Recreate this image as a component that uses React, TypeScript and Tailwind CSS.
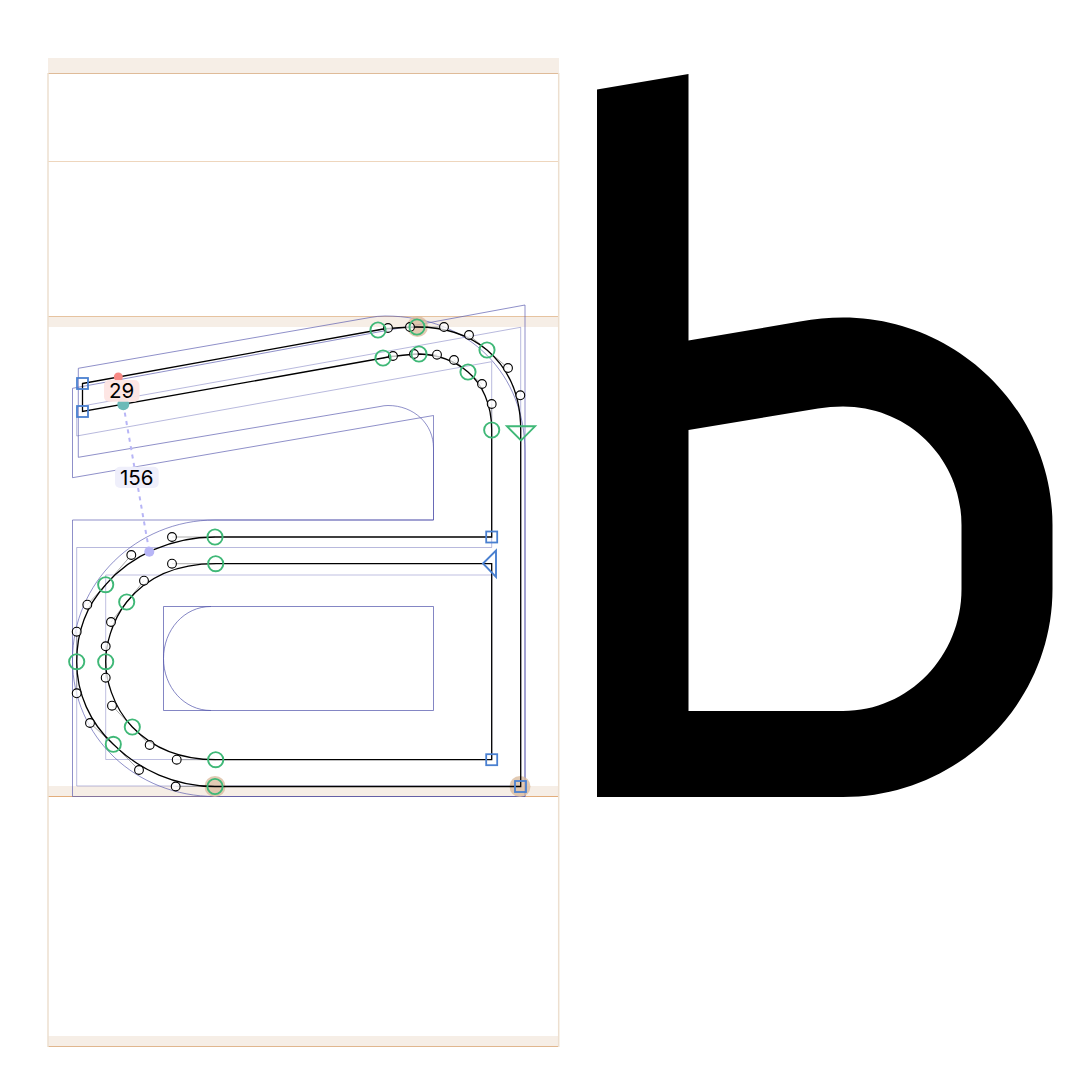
// font editor: glyph "b" outline view + rendered preview
const bands = [
  { y: 58, h: 15 },
  { y: 316, h: 11 },
  { y: 786, h: 10.5 },
  { y: 1036, h: 10 },
];

const metrics = [
  { y: 73.5, color: "#dfbb98" },
  { y: 161.5, color: "#eed6bd" },
  { y: 316.5, color: "#e6c3a0" },
  { y: 796.5, color: "#e2ad7c" },
  { y: 1046.5, color: "#e0b68e" },
];

// skeleton / source drawings behind the contour
const ghosts = [
  { d: "M72.5 388.3L525 305V796.5H72.5V520H433.5V415.5L72.5 477.7Z", opacity: 0.66 },
  { d: "M76.7 407L520.7 327.3V786H76.7V547.5H491.7V361.7L76.7 436Z", opacity: 0.42 },
  { d: "M105.7 575H491.7V759.5H105.7Z", opacity: 0.38 },
  {
    d: "M78.3 368.3L370 317.5Q378 316 385 316C470 316 525 375 525 452V796.5H215C136 796.5 72.5 737 72.5 660C72.5 583 136 520 215 520H433.5V448C433.5 424 414 405.5 388 405.5Q384 405.5 380 406.5L78.3 457.3Z",
    opacity: 0.66,
  },
  { d: "M163.5 606.5H433.5V710.5H163.5Z", opacity: 0.72 },
  { d: "M211 606.5C184 606.5 163.5 630 163.5 658.5C163.5 687 184 710.5 211 710.5", opacity: 0.72 },
];

const outer =
  "M82.5 383.5L378 330C388 328 410 327 417 327C444 327 469 335 487 350C508 368 520.7 395 520.7 430V786.5H215C175.7 786.5 139 770 113.3 744.3C90 723 76.7 693.3 76.7 661.7C76.7 631.7 87.3 604.7 105.7 584.7C131.3 555 172 537 215 537H491.7V430C491.7 404 482 384 468 372C454 360 437 354.7 419 354C414 354 393 356 383 358L82.5 411.5Z";
const inner =
  "M215.7 563.7H491.7V759.7H215.7C176.7 759.7 149.7 745 132.3 727C112 705.7 105.7 677.7 105.7 661.7C105.7 646.3 111 622 126.7 602C144 580.7 172 563.7 215.7 563.7Z";

// on-curve point -> its two handles
const smooth = [
  { on: [378, 330], off: [[388, 328]] },
  { on: [417, 327], off: [[410, 327], [444, 327]] },
  { on: [487, 350], off: [[469, 335], [508, 368]] },
  { on: [468, 372], off: [[454, 360], [482, 384]] },
  { on: [419, 354], off: [[414, 354], [437, 354.7]] },
  { on: [383, 358], off: [[393, 356]] },
  { on: [491.7, 430], off: [[491.7, 404]] },
  { on: [215, 537], off: [[172, 537]] },
  { on: [105.7, 584.7], off: [[87.3, 604.7], [131.3, 555]] },
  { on: [76.7, 661.7], off: [[76.7, 631.7], [76.7, 693.3]] },
  { on: [113.3, 744.3], off: [[90, 723], [139, 770]] },
  { on: [215, 786.5], off: [[175.7, 786.5]] },
  { on: [215.7, 563.7], off: [[172, 563.7]] },
  { on: [126.7, 602], off: [[144, 580.7], [111, 622]] },
  { on: [105.7, 661.7], off: [[105.7, 646.3], [105.7, 677.7]] },
  { on: [132.3, 727], off: [[112, 705.7], [149.7, 745]] },
  { on: [215.7, 759.7], off: [[176.7, 759.7]] },
];

const corners = [
  [82.5, 383.5],
  [82.5, 411.5],
  [491.7, 537],
  [491.7, 759.7],
  [520.5, 786.5],
];

const halos = [
  [417.5, 326.5],
  [215, 786.5],
  [520, 786.5],
];

function EditorCanvas() {
  return (
    <svg width="560" height="1089" viewBox="0 0 560 1089" className="block shrink-0">
      {bands.map((b) => (
        <rect key={b.y} x="48" y={b.y} width="511" height={b.h} fill="#f6eee6" />
      ))}
      {metrics.map((m) => (
        <line key={m.y} x1="48" x2="559" y1={m.y} y2={m.y} stroke={m.color} />
      ))}
      <line x1="48" x2="48" y1="73" y2="1047" stroke="#eddfcf" strokeWidth="1.5" />
      <line x1="558.7" x2="558.7" y1="73" y2="1047" stroke="#eddfcf" strokeWidth="1.5" />

      {ghosts.map((g, i) => (
        <path key={i} d={g.d} fill="none" stroke="#5557ad" strokeOpacity={g.opacity} />
      ))}

      {halos.map(([x, y]) => (
        <circle key={x} cx={x} cy={y} r="10.5" fill="#d8b89a" fillOpacity="0.75" />
      ))}

      {/* handles */}
      {smooth.flatMap((p) =>
        p.off.map(([x, y]) => (
          <line key={`${x}-${y}`} x1={p.on[0]} y1={p.on[1]} x2={x} y2={y} stroke="#888" strokeWidth="0.7" />
        )),
      )}

      <path d={outer} fill="none" stroke="#000" strokeWidth="1.3" />
      <path d={inner} fill="none" stroke="#000" strokeWidth="1.3" />

      {/* measure between stems */}
      <line x1="123.3" y1="404.3" x2="149.3" y2="551.7" stroke="#b7b5f6" strokeWidth="2" strokeDasharray="4 4.5" />
      <circle cx="118.3" cy="377" r="4.5" fill="#f78a85" />
      <circle cx="123.3" cy="404.3" r="6" fill="#6cbab8" />
      <circle cx="149.3" cy="551.7" r="5" fill="#b7b5f6" />

      {smooth.flatMap((p) =>
        p.off.map(([x, y]) => (
          <circle key={`${x}:${y}`} cx={x} cy={y} r="4.4" fill="#fff" fillOpacity="0.75" stroke="#000" strokeWidth="1.1" />
        )),
      )}
      <circle cx="520.3" cy="395.3" r="4.4" fill="#fff" fillOpacity="0.75" stroke="#000" strokeWidth="1.1" />
      {smooth.map((p) => (
        <circle key={`${p.on[0]}:${p.on[1]}`} cx={p.on[0]} cy={p.on[1]} r="7.6" fill="none" stroke="#3fb877" strokeWidth="1.9" />
      ))}
      <path d="M507 426.3H535L521 440.3Z" fill="none" stroke="#3fb877" strokeWidth="1.9" />
      <path d="M483 563.5L496 550.5V577L483 563.5Z" fill="none" stroke="#4a80d0" strokeWidth="1.9" />
      {corners.map(([x, y]) => (
        <rect key={`${x}:${y}`} x={x - 5.5} y={y - 5.5} width="11" height="11" fill="none" stroke="#4a80d0" strokeWidth="1.8" />
      ))}

      <rect x="104" y="380" width="35.5" height="21.7" rx="5" fill="#fde5e3" fillOpacity="0.95" />
      <text x="121.7" y="398" textAnchor="middle" fontSize="20.5" fill="#000" className="font-['Inter',sans-serif]">29</text>
      <rect x="115" y="466.7" width="43.7" height="21.3" rx="5" fill="#efeffb" />
      <text x="136.8" y="484.5" textAnchor="middle" fontSize="20.5" fill="#000" className="font-['Inter',sans-serif]">156</text>
    </svg>
  );
}

function GlyphPreview() {
  return (
    <svg width="528" height="1089" viewBox="560 0 528 1089" className="block shrink-0">
      <path
        fillRule="evenodd"
        d="M597 89.5L688.5 74V340.5L800 321.5Q822 317.5 843 317.5C958 317.5 1052.5 411 1052.5 525V589C1052.5 704 958 797 843 797H597ZM688.5 430V711H843C909 711 961.5 656 961.5 589V525C961.5 459 909 406.5 843 406.5Q830 406.5 818 408.5Z"
      />
    </svg>
  );
}

export default function App() {
  return (
    <div className="flex h-[1089px] w-[1088px] overflow-hidden bg-white">
      <EditorCanvas />
      <GlyphPreview />
    </div>
  );
}
